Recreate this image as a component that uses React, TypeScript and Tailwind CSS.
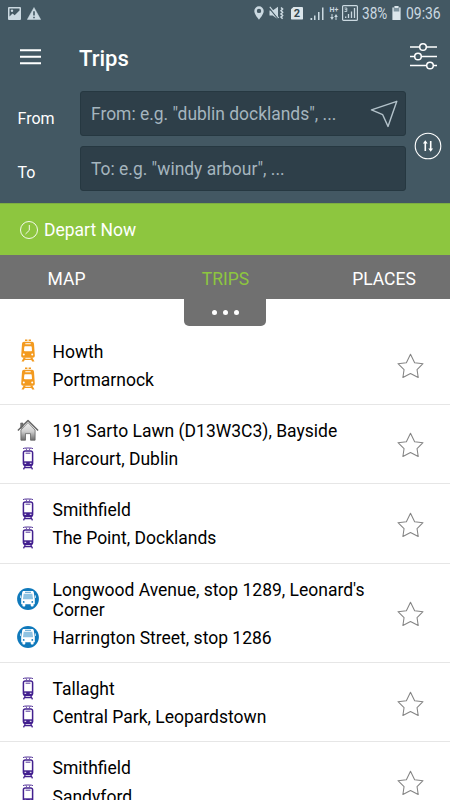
type StopKind = "rail" | "luas" | "bus" | "home";

type Stop = {
  kind: StopKind;
  name: string;
};

type Trip = {
  from: Stop;
  to: Stop;
};

const trips: Trip[] = [
  { from: { kind: "rail", name: "Howth" }, to: { kind: "rail", name: "Portmarnock" } },
  {
    from: { kind: "home", name: "191 Sarto Lawn (D13W3C3), Bayside" },
    to: { kind: "luas", name: "Harcourt, Dublin" },
  },
  { from: { kind: "luas", name: "Smithfield" }, to: { kind: "luas", name: "The Point, Docklands" } },
  {
    from: { kind: "bus", name: "Longwood Avenue, stop 1289, Leonard's Corner" },
    to: { kind: "bus", name: "Harrington Street, stop 1286" },
  },
  { from: { kind: "luas", name: "Tallaght" }, to: { kind: "luas", name: "Central Park, Leopardstown" } },
  { from: { kind: "luas", name: "Smithfield" }, to: { kind: "luas", name: "Sandyford" } },
];

const RailIcon = () => (
  <svg width="14" height="23" viewBox="0 0 14 23" fill="#f39a1f">
    <path d="M4 0.6h2.400v1.300H4zM7.600 0.6H10v1.300H7.600z" />
    <path
      fillRule="evenodd"
      d="M3 2.800h8a2 2 0 0 1 2 1.900l.8 11.800a2 2 0 0 1-2 2.200H2.200a2 2 0 0 1-2-2.200L1 4.700a2 2 0 0 1 2-1.900zM4.300 4.200v1.100h5.400V4.200zM4 7.200a.7.7 0 0 0-.7.7l-.3 3.700c0 .4.3.7.7.7h6.600c.4 0 .7-.3.7-.7l-.3-3.700a.7.7 0 0 0-.7-.7zM2.800 14.500a1 1 0 1 0 0 2 1 1 0 0 0 0-2zM11.200 14.500a1 1 0 1 0 0 2 1 1 0 0 0 0-2z"
    />
    <path d="M2.700 18.500h2.100l-1.900 4H.5zM9.200 18.500h2.100l2.200 4h-2.400zM4 19.800h6v1.200H4z" />
  </svg>
);

const LuasIcon = () => (
  <svg width="12" height="23" viewBox="0 0 12 23" fill="none" stroke="#43208f">
    <path d="M1 1.600Q2.500 1 4.500 1h3Q9.500 1 11 1.600" strokeWidth="0.900" />
    <path d="M4 1.200l.8 2M8 1.200l-.8 2" strokeWidth="0.700" />
    <path d="M3.200 4h5.600a1.800 1.800 0 0 1 1.800 1.800v11a1.600 1.600 0 0 1-1.600 1.600H3a1.600 1.600 0 0 1-1.600-1.600v-11A1.800 1.800 0 0 1 3.200 4z" strokeWidth="1.500" />
    <path d="M3.600 6.200h4.800" strokeWidth="0.900" />
    <path d="M2 14.300h8v4.100H2z" fill="#43208f" stroke="none" />
    <path d="M2.500 16.300h1.700M7.800 16.300h1.700" stroke="#fff" strokeWidth="1" />
    <path d="M3.200 19L1.500 22.400M8.800 19l1.700 3.400M2.600 20.600h6.800" strokeWidth="1.300" />
  </svg>
);

const BusIcon = () => (
  <svg width="22" height="22" viewBox="0 0 22 22">
    <circle cx="11" cy="11" r="10.900" fill="#0f79bb" />
    <path
      fill="#fff"
      d="M6.800 3h8.400c.9 0 1.500.6 1.600 1.400l1 6.700v5.200h-1.200v1.300c0 .6-.4 1-1 1h-.9a1 1 0 0 1-1-1v-1.300H8.300v1.300c0 .6-.4 1-1 1h-.9a1 1 0 0 1-1-1v-1.300H4.200v-5.200l1-6.700c.1-.8.7-1.400 1.600-1.400z"
    />
    <path d="M8 4.300h6" stroke="#0f79bb" strokeWidth="0.700" />
    <path d="M6.700 5.800h8.600l.8 5.500H5.900z" fill="#8fc3e2" />
    <circle cx="6.700" cy="13.900" r="0.900" fill="#0f79bb" />
    <circle cx="15.300" cy="13.900" r="0.900" fill="#0f79bb" />
    <path d="M3.600 7.400v2.600M18.400 7.400v2.600" stroke="#fff" strokeWidth="0.800" />
  </svg>
);

const HomeIcon = () => (
  <svg width="22" height="22" viewBox="0 0 22 22">
    <defs>
      <linearGradient id="house" x1="0" y1="0" x2="0" y2="1">
        <stop offset="0" stopColor="#f0f0f0" />
        <stop offset="0.500" stopColor="#cfcfcf" />
        <stop offset="1" stopColor="#6c6c6c" />
      </linearGradient>
    </defs>
    <path d="M3.700 4h2.300v3.500L3.700 10z" fill="#777" stroke="#5d5d5d" strokeWidth="0.600" />
    <path d="M3.900 11L11 3.500l7.100 7.500v10.200h-4.600v-6.600h-5v6.600H3.900z" fill="url(#house)" stroke="#666" strokeWidth="0.800" />
    <path d="M.9 11.500L11 1.500l10.100 10" fill="none" stroke="#666" strokeWidth="1.500" strokeLinejoin="round" />
  </svg>
);

const StopIcon = ({ kind }: { kind: StopKind }) => {
  if (kind === "rail") return <RailIcon />;
  if (kind === "luas") return <LuasIcon />;
  if (kind === "bus") return <BusIcon />;
  return <HomeIcon />;
};

const StopLine = ({ stop }: { stop: Stop }) => (
  <div className="flex items-center">
    <div className="-mt-[5px] -mb-[2px] flex h-[23px] w-[55px] shrink-0 items-center justify-center">
      <StopIcon kind={stop.kind} />
    </div>
    <span className="-ml-[2.500px] w-[325px] leading-[20.500px]">{stop.name}</span>
  </div>
);

const Star = () => (
  <svg width="27" height="26" viewBox="0 0 28 27" fill="none" stroke="#858585" strokeWidth="1.100" strokeLinejoin="round">
    <path d="M14 1.300l4.300 8.900 8.700.9-6.200 6.200L22 25.400l-8-4.200-7.900 4.200 1.200-8.100L1 11.100l8.700-.9z" />
  </svg>
);

const StatusBar = () => (
  <div className="flex h-7 items-center justify-between pr-[9px] pl-2 text-[#cbd9e1]">
    <div className="-mt-[2px] flex items-center gap-1.5">
      <svg width="13" height="13" viewBox="0 0 13 13">
        <path fill="currentColor" fillRule="evenodd" d="M1 0h11a1 1 0 0 1 1 1v11a1 1 0 0 1-1 1H1a1 1 0 0 1-1-1V1a1 1 0 0 1 1-1zM1.500 1.500v8l3-3 2.200 1.800 4.800-4.800v-2z" />
        <circle cx="4" cy="3.800" r="1.200" fill="currentColor" />
      </svg>
      <svg width="14" height="13" viewBox="0 0 14 13">
        <path d="M7 .5L13.700 12.500H.3z" fill="currentColor" stroke="currentColor" strokeWidth="0.500" strokeLinejoin="round" />
        <path d="M7 4.300v4.200M7 9.700v1.500" stroke="#435863" strokeWidth="1.600" />
      </svg>
    </div>
    <div className="-mt-[2px] flex items-center">
      <svg width="10" height="14" viewBox="0 0 10 14" fill="currentColor">
        <path fillRule="evenodd" d="M5 .3a4.700 4.700 0 0 1 4.700 4.700C9.700 8.500 5 13.700 5 13.700S.3 8.500.3 5A4.700 4.700 0 0 1 5 .3zM5 2.700a2.200 2.200 0 1 0 0 4.400 2.200 2.200 0 0 0 0-4.400z" />
      </svg>
      <svg className="ml-[5px]" width="15" height="14" viewBox="0 0 15 14" fill="currentColor">
        <path d="M.5 4.500h3.200L9 .8v12.400L3.700 9.500H.5z" />
        <path d="M.3 2.200l9.500 11.500" stroke="#435863" strokeWidth="1.200" />
        <path d="M.8.800l9 11.200" stroke="currentColor" strokeWidth="1.100" />
        <path d="M12 1.500l1.600 1.600-1.600 1.600 1.600 1.600-1.600 1.600 1.600 1.600-1.600 1.600 1.600 1.600" fill="none" stroke="currentColor" strokeWidth="1.500" />
      </svg>
      <div className="ml-[7px] h-[13px] w-3 rounded-[1px] bg-[#dce6eb] text-center text-[11px] leading-[13px] font-bold text-[#33464f] [clip-path:polygon(25%_0,100%_0,100%_100%,0_100%,0_22%)]">
        2
      </div>
      <svg className="ml-[7px]" width="14" height="13" viewBox="0 0 14 13" fill="currentColor">
        <path d="M.5 11h1.700v2H.5zM4 8.500h1.500V13H4zM8 5h1.500v8H8zM12 .5h1.500V13H12z" />
      </svg>
      <div className="ml-[5px] flex w-[10px] flex-col items-center text-[7px] leading-[7px] font-bold">
        <span>H+</span>
        <svg width="8" height="6" viewBox="0 0 8 6" fill="currentColor">
          <path d="M1.500 0h1v3h1.300L2 6 .2 3h1.300zM5.500 6h1V3h1.300L6 0 4.200 3h1.300z" />
        </svg>
      </div>
      <svg className="ml-[3px]" width="16" height="16" viewBox="0 0 16 16" fill="none" stroke="currentColor">
        <rect x="0.600" y="0.600" width="14.800" height="14.800" rx="1" strokeWidth="1.200" />
        <path d="M2.500 3h2.300v3.500H2.500M2.800 4.700h2" strokeWidth="0.900" />
        <path d="M3.700 11.500V13M6.500 9v4M9.500 6.500V13M12.500 3v10" strokeWidth="1.300" />
      </svg>
      <span className="mt-[2px] ml-[4px] w-[26px] text-[16px] leading-none">
        <span className="inline-block origin-left scale-x-[0.850]">38%</span>
      </span>
      <svg className="ml-[4px]" width="9" height="14" viewBox="0 0 9 14">
        <path d="M2.500 0h4v1.500h2V14h-8V1.500h2z" fill="#7f949f" />
        <path d="M.5 5.500h8V14h-8zM.5 1.500h1.200v4H.5zM7.300 1.500h1.200v4H7.300zM2.500 0h4v2h-4z" fill="#dce6eb" />
      </svg>
      <span className="mt-[2px] ml-[5px] w-[35px] text-[16px] leading-none">
        <span className="inline-block origin-left scale-x-[0.870]">09:36</span>
      </span>
    </div>
  </div>
);

const SearchField = ({ placeholder, locate }: { placeholder: string; locate?: boolean }) => (
  <div className="flex h-[45px] items-center justify-between rounded-[3px] border border-[#263841] bg-[#2e3f49] pr-[7px] pl-[10px] text-[17.450px] text-[#a5b5be]">
    <span className="pt-[2px]">{placeholder}</span>
    {locate && (
      <svg className="mt-px" width="28" height="28" viewBox="0 0 28 28" fill="none" stroke="#b3c2ca" strokeWidth="1.400" strokeLinejoin="round">
        <path d="M26.800 1.300L1.500 9.900l11.200 4.800 5.300 11.700z" />
      </svg>
    )}
  </div>
);

const App = () => {
  return (
    <div className="flex h-[800px] w-[450px] flex-col overflow-hidden bg-white font-[Roboto,sans-serif] text-black">
      <header className="flex h-[203px] shrink-0 flex-col bg-[#435863] text-white">
        <StatusBar />
        <div className="flex h-[63px] items-start pt-[15px] pr-[13px] pl-5">
          <svg className="mt-[6px]" width="21" height="16" viewBox="0 0 21 16" stroke="#fff" strokeWidth="1.900">
            <path d="M0 1.200h21M0 7.800h21M0 14.200h21" />
          </svg>
          <h1 className="mt-px ml-[38px] flex-1 text-[22px] leading-[30px] font-medium">Trips</h1>
          <svg className="-mt-px" width="27" height="28" viewBox="0 0 27 28" fill="#435863" stroke="#fff" strokeWidth="1.500">
            <path d="M0 5h27M0 14.500h27M0 23.500h27" />
            <circle cx="13" cy="5" r="3.300" />
            <circle cx="8" cy="14.500" r="3.300" />
            <circle cx="20" cy="23.500" r="3.300" />
          </svg>
        </div>
        <div className="flex">
          <div className="w-20 pl-[17.500px] text-base">
            <div className="flex h-[55px] items-center">From</div>
            <div className="flex h-[54px] items-center">To</div>
          </div>
          <div className="flex w-[326px] flex-col gap-[10px]">
            <SearchField placeholder={'From: e.g. "dublin docklands", ...'} locate />
            <SearchField placeholder={'To: e.g. "windy arbour", ...'} />
          </div>
          <svg className="mt-[41px] ml-2" width="28" height="28" viewBox="0 0 28 28" fill="none" stroke="#fff">
            <circle cx="14" cy="14" r="12.800" strokeWidth="1.100" />
            <path d="M11.300 19V10M16.700 9v9" strokeWidth="1.600" />
            <path d="M11.300 8.200l-2.400 3.300h4.800zM16.700 19.800l-2.400-3.300h4.800z" fill="#fff" stroke="none" />
          </svg>
        </div>
      </header>

      <div className="flex h-[52px] shrink-0 items-center border-t border-[#7eae42] bg-[#8dc63f] pl-5 text-[17.500px] text-white">
        <svg width="18" height="18" viewBox="0 0 18 18" fill="none" stroke="#fff" strokeWidth="0.900">
          <circle cx="9" cy="9" r="8.500" />
          <path d="M9.300 4v5.300L5.500 13" />
        </svg>
        <span className="ml-[6px] pt-[2px]">Depart Now</span>
      </div>

      <nav className="flex h-[44px] shrink-0 items-center bg-[#707070] pt-1 text-center text-[17.500px] text-white">
        <span className="w-[133px]">MAP</span>
        <span className="flex-1 text-[#8dc63f]">TRIPS</span>
        <span className="w-[132px]">PLACES</span>
      </nav>
      <div className="mx-auto flex h-[27px] w-[82px] shrink-0 items-center justify-center gap-[6px] rounded-b-[5px] bg-[#707070] pb-px">
        <span className="size-[5px] rounded-full bg-white" />
        <span className="size-[5px] rounded-full bg-white" />
        <span className="size-[5px] rounded-full bg-white" />
      </div>

      <div className="text-[17.500px]">
        {trips.map((trip, index) => (
          <div key={index} className="flex items-center border-b border-[#e6e6e6] pt-4 pb-[13.600px]">
            <div className="flex flex-col gap-[7.600px]">
              <StopLine stop={trip.from} />
              <StopLine stop={trip.to} />
            </div>
            <div className="ml-[19.500px]">
              <Star />
            </div>
          </div>
        ))}
      </div>
    </div>
  );
};

export default App;
